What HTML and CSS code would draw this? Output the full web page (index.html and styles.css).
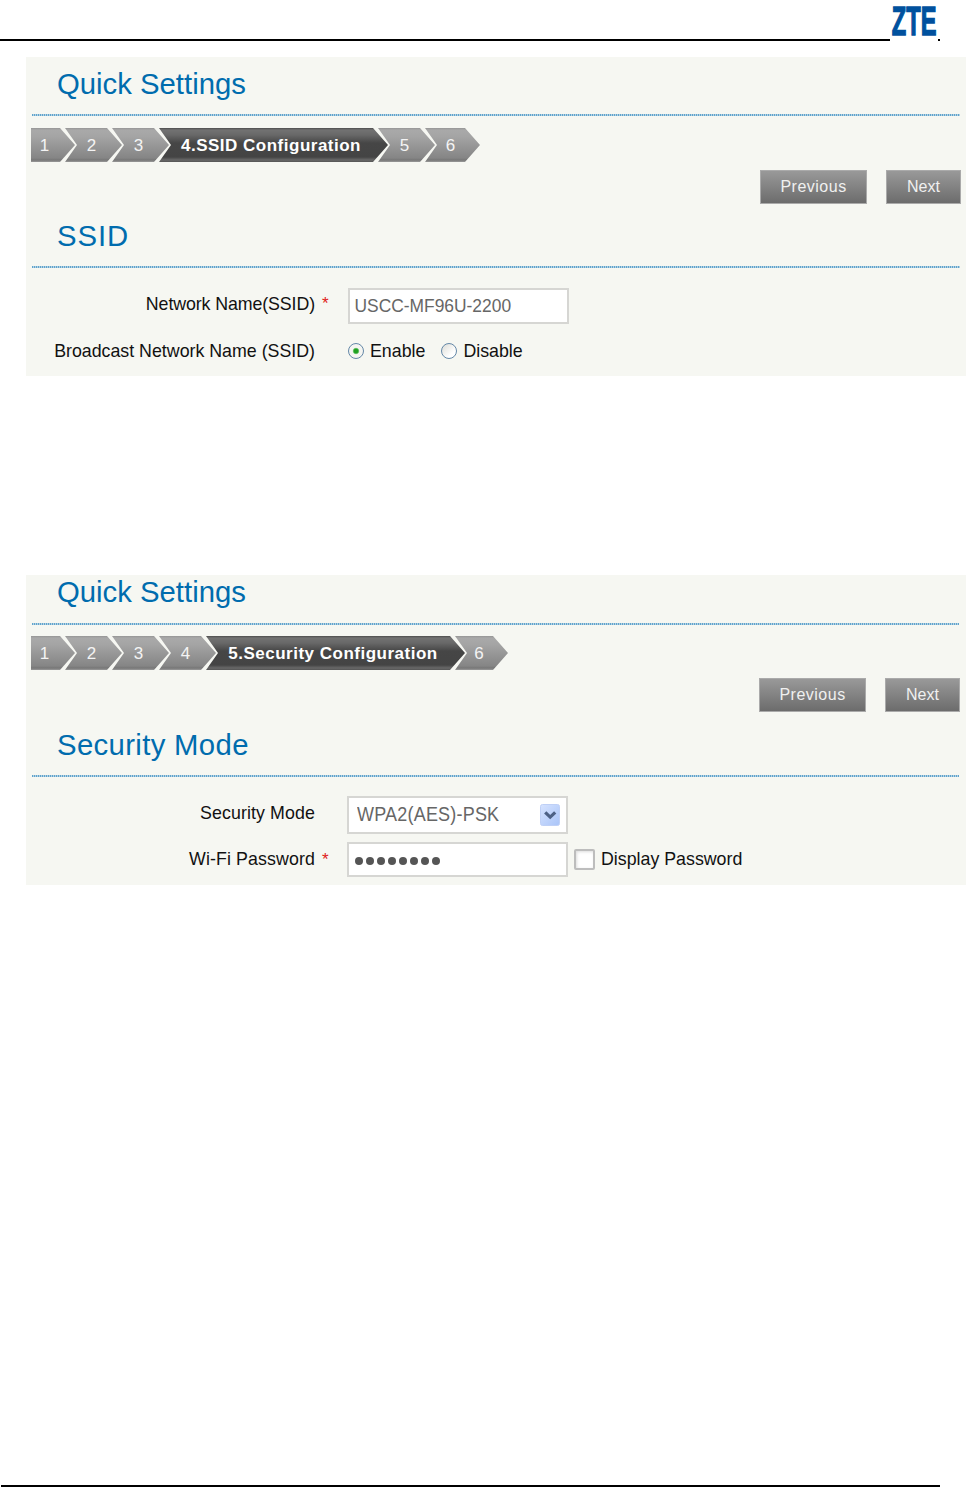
FILE: index.html
```html
<!DOCTYPE html>
<html lang="en">
<head>
<meta charset="utf-8">
<title>Quick Settings</title>
<link rel="stylesheet" href="styles.css">
</head>
<body>
<div class="page">
  <header class="masthead">
    <span class="masthead-rule"></span>
    <svg class="logo" viewBox="0 0 48 40" role="img" aria-label="ZTE">
      <text class="logo-letters" x="1.8" y="34.6" textLength="44.6" lengthAdjust="spacingAndGlyphs">ZTE</text>
    </svg>
    <span class="masthead-end"></span>
  </header>

  <section class="panel panel-ssid">
    <h1 class="title">Quick Settings</h1>
    <div class="dots"></div>
    <ol class="steps">
      <li class="step first"><span>1</span></li>
      <li class="step"><span>2</span></li>
      <li class="step"><span>3</span></li>
      <li class="step active"><span>4.SSID Configuration</span></li>
      <li class="step"><span>5</span></li>
      <li class="step last"><span>6</span></li>
    </ol>
    <div class="actions">
      <button class="btn prev">Previous</button>
      <button class="btn next">Next</button>
    </div>
    <h2 class="title sub ssid">SSID</h2>
    <div class="dots"></div>
    <div class="row row-name">
      <span class="label">Network Name(SSID)</span><span class="star">*</span>
      <div class="field"><span class="value">USCC-MF96U-2200</span></div>
    </div>
    <div class="row row-broadcast">
      <span class="label">Broadcast Network Name (SSID)</span><span class="star"></span>
      <span class="radio on"></span><span class="option enable">Enable</span>
      <span class="radio"></span><span class="option">Disable</span>
    </div>
  </section>

  <section class="panel panel-security">
    <h1 class="title">Quick Settings</h1>
    <div class="dots"></div>
    <ol class="steps">
      <li class="step first"><span>1</span></li>
      <li class="step"><span>2</span></li>
      <li class="step"><span>3</span></li>
      <li class="step"><span>4</span></li>
      <li class="step active wide"><span>5.Security Configuration</span></li>
      <li class="step last"><span>6</span></li>
    </ol>
    <div class="actions">
      <button class="btn prev">Previous</button>
      <button class="btn next">Next</button>
    </div>
    <h2 class="title sub">Security Mode</h2>
    <div class="dots"></div>
    <div class="row row-mode">
      <span class="label">Security Mode</span><span class="star"></span>
      <div class="field select"><span class="value">WPA2(AES)-PSK</span>
        <svg class="arrow" viewBox="0 0 20 22">
          <defs><linearGradient id="face" x2="1" y2="1"><stop offset="0" stop-color="#d6e3ff"/><stop offset="1" stop-color="#a9c4f8"/></linearGradient></defs>
          <rect x=".5" y=".5" width="19" height="21" rx="2" fill="url(#face)" stroke="#bfd0f6"/>
          <path d="M5.2 8.3l5 4.8 5-4.8" fill="none" stroke="#4d6185" stroke-width="3.2"/>
        </svg>
      </div>
    </div>
    <div class="row row-password">
      <span class="label">Wi-Fi Password</span><span class="star">*</span>
      <div class="field password">
        <i></i><i></i><i></i><i></i><i></i><i></i><i></i><i></i>
      </div>
      <span class="check"></span><span class="option">Display Password</span>
    </div>
  </section>

  <footer class="foot-rule"></footer>
</div>
</body>
</html>
```
FILE: styles.css
```css
* { box-sizing: border-box; }
body { margin: 0; background: #fff; font-family: "Liberation Sans", Arial, sans-serif; }
.page { width: 966px; height: 1487px; display: flex; flex-direction: column; overflow: hidden; }

.masthead { height: 41px; width: 940px; display: flex; align-items: flex-end; flex: none; }
.masthead-rule { flex: 1; height: 2px; background: #000; }
.masthead-end { width: 2px; height: 2px; background: #000; }
.logo { width: 48px; height: 40px; margin-bottom: 1px; display: block; overflow: visible; }
.logo-letters { font-size: 41px; font-weight: bold; fill: #00519e; stroke: #00519e; stroke-width: 1.4px; }

.panel { margin-left: 26px; padding-left: 5px; background: #f6f7f2; flex: none; overflow: hidden; }
.panel-ssid { margin-top: 16px; height: 319px; }
.panel-security { margin-top: 199px; height: 310px; }

.title { margin: 0 0 0 26px; height: 57px; font-size: 29.3px; line-height: 53px; font-weight: normal; color: #006cae; white-space: nowrap; }
.panel-security > h1 { height: 48px; line-height: 34px; }
.title.sub { height: 62px; line-height: 64px; letter-spacing: .35px; }
.title.ssid { letter-spacing: .9px; }
.panel-security .title.sub { height: 63px; line-height: 66px; }
.dots { height: 2px; margin: 0 6px 0 1px; background: repeating-linear-gradient(90deg, #5fa3cd 0 1px, #b4d2e2 1px 2px); }
.panel-security .dots { margin-right: 7px; }

.steps { display: flex; margin: 12px 0 0; padding: 0; list-style: none; height: 34px; }
.panel-security .steps { margin-top: 11px; }
.step { width: 58px; height: 34px; margin-right: -11px; flex: none; display: flex; align-items: center; justify-content: center; color: #f4f4f4; font-size: 17px;
  background: linear-gradient(#969696 0, #a9a9a9 2px, #a5a5a5 8px, #858585 30px, #777 32px, #9a9a9a 34px);
  clip-path: polygon(1px 0, calc(100% - 15px) 0, 100% 50%, calc(100% - 15px) 100%, 1px 100%, 13px 50%); }
.step span { padding: 1px 3px 0 0; }
.step.first { width: 44px; clip-path: polygon(0 0, calc(100% - 15px) 0, 100% 50%, calc(100% - 15px) 100%, 0 100%); }
.step.first span { padding-right: 17px; }
.step.last { width: 56px; }
.panel-security .step.last { width: 54px; }
.panel-security .step.last span { padding-right: 4px; }
.step.active { width: 230px; font-weight: bold; letter-spacing: .5px; color: #fff; white-space: nowrap;
  background: linear-gradient(#4d4d4d 0, #727272 2px, #686868 7px, #464646 15px, #444 29px, #686868 32px, #555 34px); }
.step.active span { padding-right: 4px; }
.step.active.wide { width: 260px; }

.actions { display: flex; justify-content: flex-end; gap: 19px; margin: 8px 5px 0 0; height: 34px; }
.panel-security .actions { margin: 8px 6px 0 0; }
.btn { height: 34px; padding: 0; border: 1px solid #aaa; background: linear-gradient(#999, #6c6c6c); color: #f0f0f0; font: 16px/32px "Liberation Sans", Arial, sans-serif; letter-spacing: .5px; }
.prev { width: 107px; }
.next { width: 75px; letter-spacing: 0; }

.row { display: flex; align-items: center; font-size: 17.8px; color: #111; white-space: nowrap; }
.label { width: 284px; text-align: right; }
.row-mode .label, .row-password .label, .row-name .label { letter-spacing: .1px; }
.row-name .label { letter-spacing: -.1px; }
.star { width: 33px; padding-left: 7px; color: #e02020; font-size: 17px; }
.row-name { margin-top: 20px; height: 36px; }
.row-name .label, .row-name .star { padding-bottom: 4px; }
.row-broadcast { margin-top: 16px; height: 22px; }
.row-mode { margin-top: 19px; height: 38px; }
.row-mode .label { padding-bottom: 4px; }
.row-password { margin-top: 8px; height: 35px; }

.field { width: 221px; height: 100%; border: 2px solid #d6d6d3; background: #fff; display: flex; align-items: center; color: #666; padding-left: 5px; margin-left: -.5px; }
.panel-security .field { margin-left: -1px; }
.value { display: inline-block; font-size: 17.4px; transform: scaleY(1.08); }
.select { padding: 0 6px 0 8px; justify-content: space-between; }
.select .value { font-size: 18px; letter-spacing: .2px; }
.arrow { width: 20px; height: 22px; }
.password { gap: 3px; padding: 3px 0 0 6px; }
.password i { width: 8px; height: 8px; border-radius: 50%; background: #555; }

.radio { width: 16px; height: 16px; border: 1.5px solid #6488a8; border-radius: 50%; background: linear-gradient(135deg, #dcdcd6, #fff 70%); }
.radio.on { background: radial-gradient(circle, #21a121 0 2px, #8fd48f 3px, #f5f5f1 3.6px); }
.option { padding-left: 6px; }
.enable { padding-right: 16px; }
.check { width: 21px; height: 21px; margin-left: 6px; border: 2px solid #bdbdbd; border-radius: 2px; background: #fff; box-shadow: inset 1px 1px 3px #ddd; }

.foot-rule { margin: auto 26px 0 1px; height: 2px; background: #000; }
```
